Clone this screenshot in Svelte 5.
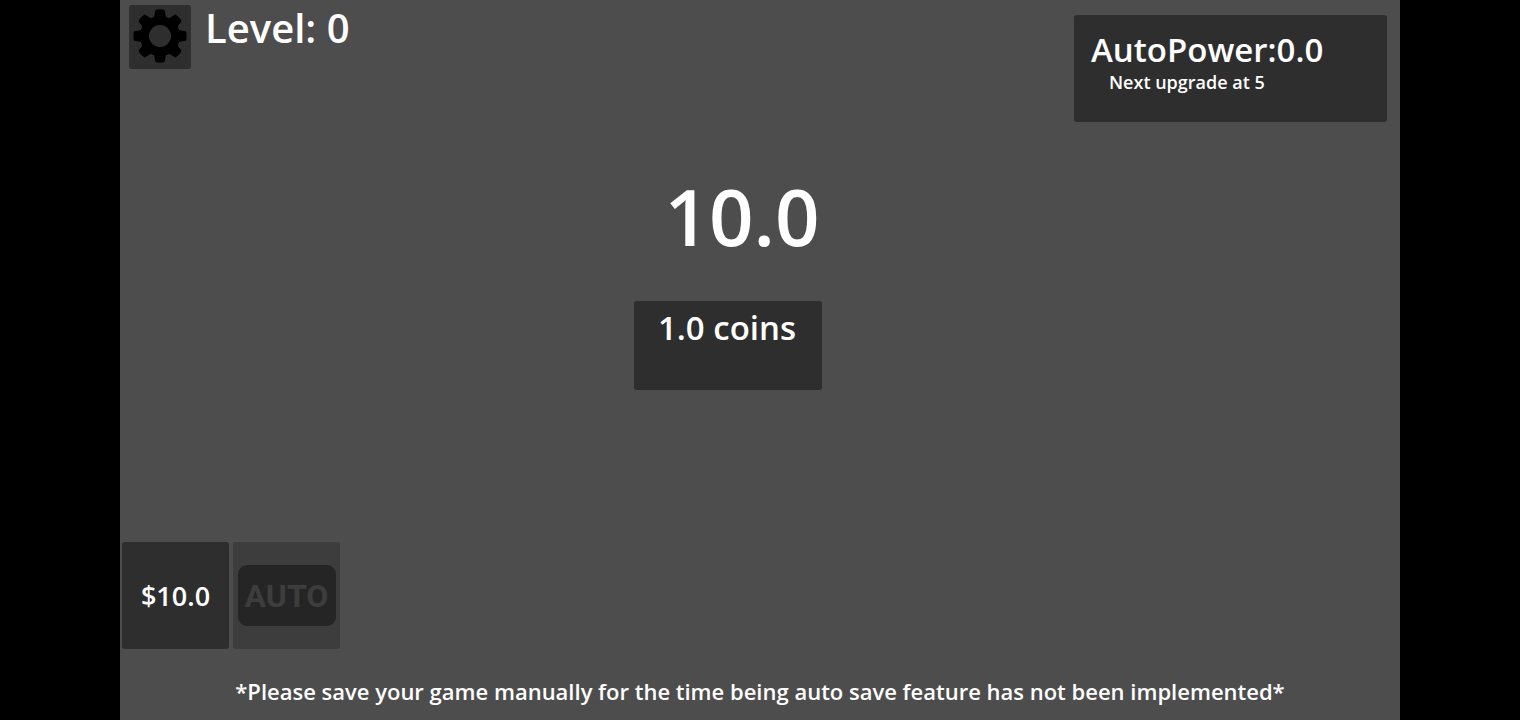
<script lang="ts">
  let level = $state(0);
  let coins = $state(10);
  let clickPower = $state(1);
  let autoPower = $state(0);
  let nextUpgrade = $state(5);
  let upgradeCost = $state(10);

  const teeth = [0, 45, 90, 135, 180, 225, 270, 315];

  function collect() {
    coins += clickPower;
  }

  function buyUpgrade() {
    if (coins < upgradeCost) return;
    coins -= upgradeCost;
    clickPower += 1;
    upgradeCost *= 2;
  }
</script>

<main class="stage">
  <header class="top-bar">
    <button class="settings" aria-label="Settings">
      <svg viewBox="0 0 54 54" aria-hidden="true">
        {#each teeth as angle (angle)}
          <path d="M19 11 Q21 9 21.5 6 L22 2.5 Q22.3 0.5 24 0.5 H30 Q31.7 0.5 32 2.5 L32.5 6 Q33 9 35 11 Z" transform="rotate({angle} 27 27)" />
        {/each}
        <path fill-rule="evenodd" d="M27 7 a20 20 0 1 1 0 40 a20 20 0 1 1 0 -40 Z M27 16 a11 11 0 1 0 0 22 a11 11 0 1 0 0 -22 Z" />
      </svg>
    </button>
    <h1 class="level">Level: {level}</h1>
    <section class="auto-power">
      <h2>AutoPower:{autoPower.toFixed(1)}</h2>
      <p>Next upgrade at {nextUpgrade}</p>
    </section>
  </header>

  <section class="bank">
    <output class="total">{coins.toFixed(1)}</output>
    <button class="collect" onclick={collect}>{clickPower.toFixed(1)} coins</button>
  </section>

  <section class="shop">
    <button class="tile" onclick={buyUpgrade}>${upgradeCost.toFixed(1)}</button>
    <button class="tile" disabled>
      <span class="auto-badge">AUTO</span>
    </button>
  </section>

  <footer>*Please save your game manually for the time being auto save feature has not been implemented*</footer>
</main>

<style>
  :global(body) {
    background: #000;
  }

  .stage {
    display: flex;
    flex-direction: column;
    box-sizing: border-box;
    max-width: calc(100vh * 16 / 9);
    min-height: 100vh;
    margin: 0 auto;
    padding-bottom: 14px;
    background: #4d4d4d;
    color: #fff;
    font-family: "Open Sans", sans-serif;
    font-weight: 600;
  }

  h1,
  h2,
  p {
    margin: 0;
    font-weight: 600;
  }

  button {
    border: 0;
    border-radius: 3px;
    background: #2e2e2e;
    color: inherit;
    font: inherit;
    cursor: pointer;
  }

  .top-bar {
    display: flex;
    align-items: flex-start;
    padding: 5px 13px 0 9px;
  }

  .settings {
    display: grid;
    place-items: center;
    width: 62px;
    height: 64px;
    padding: 0 0 2px;
  }

  .settings svg {
    width: 54px;
    height: 54px;
  }

  .level {
    margin-left: 14px;
    font-size: 40px;
    line-height: 46px;
  }

  .auto-power {
    box-sizing: border-box;
    width: 313px;
    margin: 10px 0 0 auto;
    padding: 13px 17px 30px;
    border-radius: 3px;
    background: #2e2e2e;
  }

  .auto-power h2 {
    font-size: 33px;
    line-height: 44px;
  }

  .auto-power p {
    padding-left: 18px;
    font-size: 18px;
    line-height: 20px;
  }

  .bank {
    display: flex;
    flex-direction: column;
    align-items: center;
    gap: 37px;
    padding: 46px 64px 0 0;
  }

  .total {
    padding-left: 28px;
    font-size: 78px;
    line-height: 96px;
  }

  .collect {
    padding: 7px 26px 42px 24px;
    font-size: 33px;
    line-height: 40px;
  }

  .shop {
    display: flex;
    gap: 4px;
    margin-top: auto;
    padding: 24px 2px 27px;
  }

  .tile {
    display: grid;
    place-items: center;
    width: 107px;
    height: 107px;
    padding: 0;
    font-size: 27px;
  }

  .tile:disabled {
    background: #3d3d3d;
    cursor: default;
  }

  .auto-badge {
    display: grid;
    place-items: center;
    width: 98px;
    height: 61px;
    border-radius: 9px;
    background: #252525;
    color: #3d3d3d;
    font-family: Roboto, sans-serif;
    font-size: 32px;
    font-weight: 700;
  }

  footer {
    font-size: 22px;
    line-height: 30px;
    text-align: center;
  }
</style>
